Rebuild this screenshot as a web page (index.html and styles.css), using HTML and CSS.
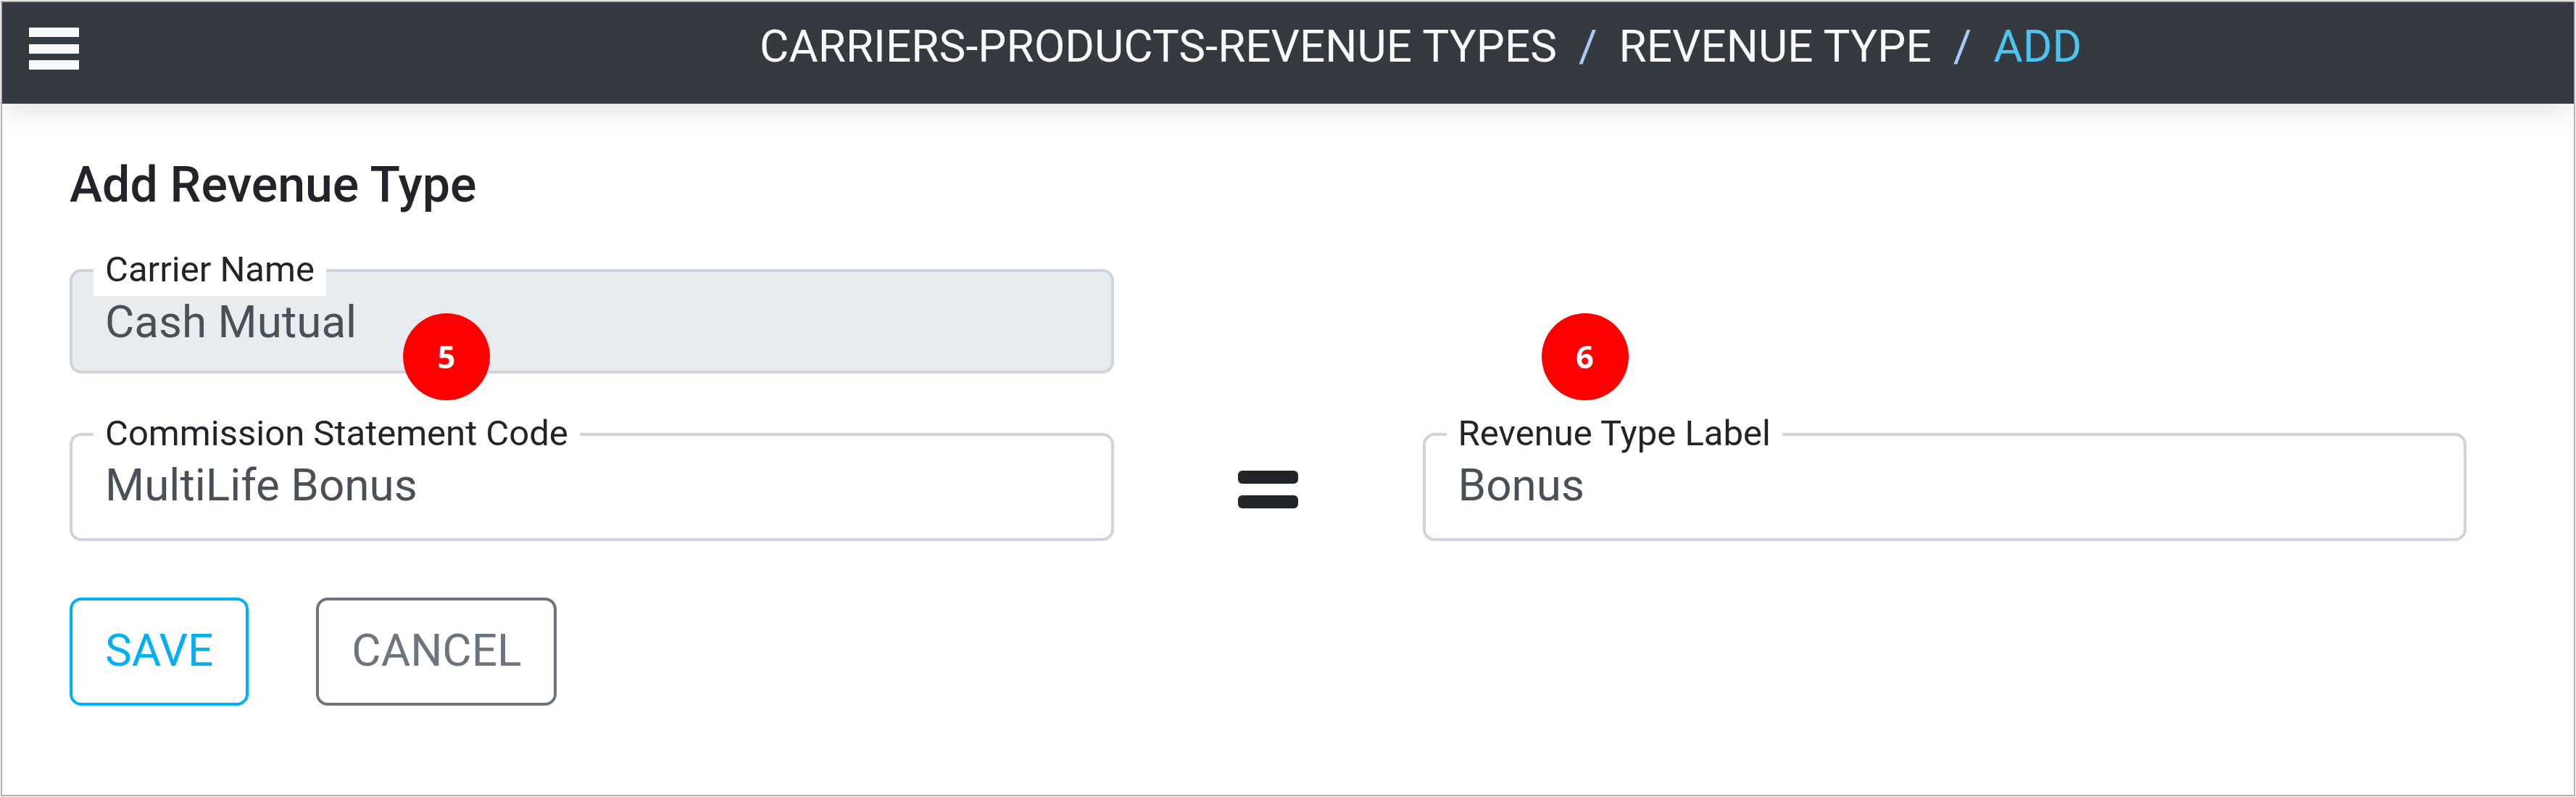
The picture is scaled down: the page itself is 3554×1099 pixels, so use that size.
FILE: index.html
```html
<!DOCTYPE html>
<html lang="en">
<head>
  <meta charset="UTF-8" />
  <meta name="viewport" content="width=device-width, initial-scale=1.0" />
  <title>Add Revenue Type</title>
  <link rel="stylesheet" href="styles.css">
</head>
<body>
  <header class="topbar">
    <button type="button" class="menu-toggle" aria-label="Menu">
      <svg width="69" height="58" viewBox="0 0 69 58" fill="currentColor">
        <rect x="0" y="0" width="69" height="13" />
        <rect x="0" y="23" width="69" height="13" />
        <rect x="0" y="45" width="69" height="13" />
      </svg>
    </button>
    <nav class="breadcrumb" aria-label="Breadcrumb">
      <a href="#carriers">CARRIERS-PRODUCTS-REVENUE TYPES</a>
      <span class="separator">/</span>
      <a href="#revenue-type">REVENUE TYPE</a>
      <span class="separator">/</span>
      <a href="#add" class="current">ADD</a>
    </nav>
  </header>

  <main>
    <h1>Add Revenue Type</h1>
    <form>
      <div class="form-grid">
        <div class="field field-carrier">
          <label for="carrier">Carrier Name</label>
          <input type="text" id="carrier" value="Cash Mutual" readonly>
        </div>

        <div class="field field-code">
          <label for="code">Commission Statement Code</label>
          <input type="text" id="code" value="MultiLife Bonus">
          <span class="badge badge-code">5</span>
        </div>
        <svg class="equals" width="83" height="52" viewBox="0 0 83 52" fill="currentColor" aria-hidden="true">
          <rect x="0" y="0" width="83" height="18" rx="6" />
          <rect x="0" y="34" width="83" height="18" rx="6" />
        </svg>
        <div class="field">
          <label for="typeLabel">Revenue Type Label</label>
          <input type="text" id="typeLabel" value="Bonus">
          <span class="badge badge-label">6</span>
        </div>
      </div>

      <div class="actions">
        <button type="submit" class="btn btn-save">SAVE</button>
        <button type="button" class="btn btn-cancel">CANCEL</button>
      </div>
    </form>
  </main>
</body>
</html>
```
FILE: styles.css
```css
* {
  box-sizing: border-box;
}
html {
  background: white;
}
body {
  margin: 1px;
  min-height: calc(100vh - 2px);
  border: 2px solid #b5b0b0;
  font-family: Roboto, sans-serif;
  background: white;
  color: #212529;
}
.topbar {
  display: flex;
  align-items: flex-start;
  padding: 21px 0 39px 37px;
  background-color: #343a40;
  box-shadow: 0 8px 40px rgba(0, 0, 0, 0.12);
  clip-path: inset(0 0 -60px 0);
}
.menu-toggle {
  display: flex;
  margin: 14px 260px 0 0;
  padding: 0;
  border: none;
  background: none;
  color: #f8f9fa;
  cursor: pointer;
}
.breadcrumb {
  flex: 1;
  display: flex;
  justify-content: center;
  gap: 30px;
  font-size: 62px;
  line-height: 80px;
  white-space: nowrap;
}
.breadcrumb a {
  color: #f8f9fa;
  text-decoration: none;
}
.breadcrumb .separator {
  color: #a9c9f8;
}
.breadcrumb .current {
  color: #4fc3f0;
}
main {
  padding: 72px 148px 120px 93px;
}
h1 {
  margin: 0 0 76px;
  font-size: 68px;
  line-height: 80px;
  font-weight: 500;
}
.form-grid {
  display: grid;
  grid-template-columns: 1fr 426px 1fr;
  row-gap: 82px;
}
.field {
  position: relative;
}
.field-carrier {
  grid-column: 1;
}
.field-code {
  grid-column: 1;
}
.field label {
  position: absolute;
  top: -35px;
  left: 33px;
  padding: 0 16px;
  background: white;
  font-size: 49px;
  line-height: 72px;
  white-space: nowrap;
}
.field input {
  display: block;
  width: 100%;
  height: 149px;
  padding: 0 45px 6px;
  border: 4px solid #ced4da;
  border-radius: 16px;
  background: white;
  color: #495057;
  font-family: inherit;
  font-size: 62px;
}
.field input[readonly] {
  height: 144px;
  padding-bottom: 0;
  background-color: #e9ecef;
}
.equals {
  place-self: center;
  margin-top: 6px;
}
/* numbered step markers over the form */
.badge {
  position: absolute;
  top: -165px;
  width: 120px;
  height: 120px;
  border-radius: 50%;
  background: #ff0000;
  color: white;
  font-family: "Open Sans", sans-serif;
  font-size: 43px;
  line-height: 120px;
  font-weight: 700;
  text-align: center;
}
.badge-code {
  left: 460px;
}
.badge-label {
  left: 164px;
}
.actions {
  display: flex;
  gap: 93px;
  margin-top: 78px;
}
.btn {
  height: 149px;
  padding: 0 45px 4px;
  border: 4px solid;
  border-radius: 16px;
  background: white;
  font-family: inherit;
  font-size: 62px;
  cursor: pointer;
}
.btn-save {
  border-color: #00b0f5;
  color: #00b0f5;
}
.btn-cancel {
  border-color: #6c757d;
  color: #6c757d;
}
```
